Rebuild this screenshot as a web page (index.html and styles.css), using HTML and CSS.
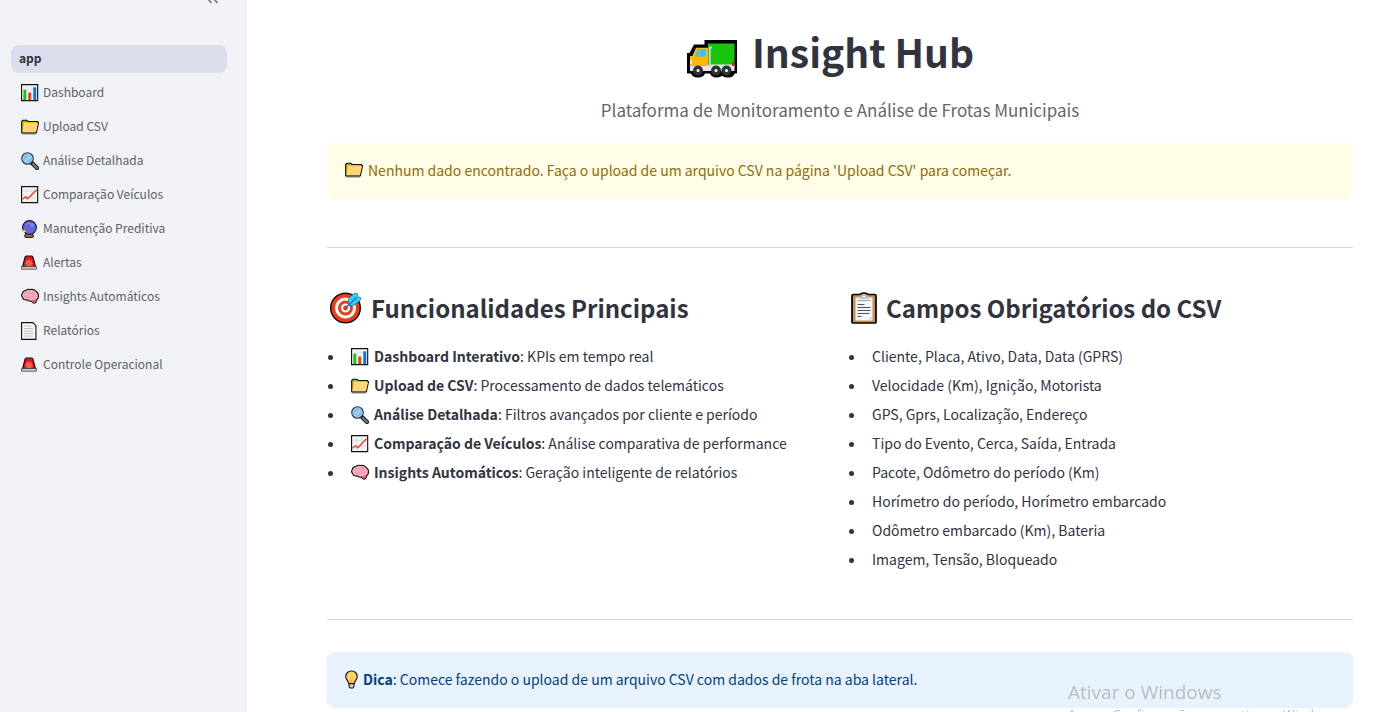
FILE: index.html
```html
<!DOCTYPE html>
<html lang="pt-BR">
<head>
<meta charset="utf-8">
<meta name="viewport" content="width=device-width, initial-scale=1">
<title>Insight Hub</title>
<link rel="stylesheet" href="styles.css">
</head>
<body>
<svg class="sprite" aria-hidden="true">
  <symbol id="chart" viewBox="0 0 19 19">
    <path d="M.6 .6h17v17H.6z" fill="#f4f4f4" stroke="#111" stroke-width="1.200"/>
    <path d="M1 5.500h16M1 11.500h16M6 1v16M11.500 1v16" stroke="#d9dade" stroke-width=".7"/>
    <path d="M2.500 6h3v11h-3z" fill="#16c60c"/><path d="M7.700 9h3v8h-3z" fill="#f03a17"/><path d="M13 3.500h3V17h-3z" fill="#0078d7"/>
  </symbol>
  <symbol id="folder" viewBox="0 0 18 18">
    <path d="M1 16h14" stroke="#9a9ca0" stroke-width="1.200"/>
    <path d="M.7 3.500 2 2.300h4l1.200 1.200h9.300v1.200h1l-2.200 10.100H.7z" fill="#ffb900" stroke="#111" stroke-width="1.200" stroke-linejoin="round"/>
    <path d="M3.200 5H17l-2.100 9.200H1.300z" fill="#ffd679"/><path d="M2.500 3.200h3.200" stroke="#3c9bc0"/>
  </symbol>
  <symbol id="lens" viewBox="0 0 18 18">
    <path d="m10.500 10.500 5.500 5.500" stroke="#111" stroke-width="4" stroke-linecap="round"/>
    <path d="m12 12 4 4" stroke="#727b83" stroke-width="2.300" stroke-linecap="round"/>
    <circle cx="6.500" cy="6.500" r="5.700" fill="#83beec" stroke="#283342" stroke-width="1.300"/>
    <circle cx="6.500" cy="6.500" r="4.700" fill="none" stroke="#b9d5e8" stroke-width=".7"/>
    <path d="m3.500 8.500 5-5 1.400 1.400-5 5z" fill="#a9d5f5"/>
  </symbol>
  <symbol id="trend" viewBox="0 0 19 19">
    <path d="M.6 .6h17v17H.6z" fill="#f4f4f4" stroke="#111" stroke-width="1.200"/>
    <path d="M1 5.500h16M1 11.500h16M6 1v16M11.500 1v16" stroke="#d3d5d9" stroke-width=".8"/>
    <path d="m1.500 14 3.300-2.700 2.300 2.200L16.500 4" fill="none" stroke="#f03a17" stroke-width="1.300"/>
  </symbol>
  <symbol id="crystal" viewBox="1 0 18 18">
    <path d="m6 13-1.500 3.200.8 1.200h7.500l.8-1.200L12 13z" fill="#a16a43" stroke="#111"/>
    <circle cx="9.500" cy="7.500" r="6.900" fill="#7160df" stroke="#1b1734" stroke-width="1.100"/>
    <path d="M6 5a5 5 0 0 1 4-2" fill="none" stroke="#a298ef"/>
    <path d="m12 2.500.6 1.900 1.900.6-1.900.6-.6 1.900-.6-1.900L9.500 5l1.900-.6z" fill="#31d2f7"/>
    <path d="m4 8.800.7 1.900 1.900.7-1.900.7L4 14l-.7-1.900-1.900-.7 1.900-.7z" fill="#fff100"/>
  </symbol>
  <symbol id="siren" viewBox="0 0 18 18">
    <path d="M1.500 13 4 3.300q.3-1.300 1.500-1.300h5q1.200 0 1.500 1.300L14.500 13z" fill="#e81224" stroke="#111" stroke-width="1.200"/>
    <path d="m8 5 1 1.700 2-.4-.4 1.900 1.600 1.300-1.700 1v2h-5v-2l-1.700-1 1.600-1.300L5 6.300l2 .4z" fill="#f7634a"/>
    <path d="M.5 12.500h15v2.700H.5z" fill="#c9cbce" stroke="#333" stroke-width=".7"/>
  </symbol>
  <symbol id="brain" viewBox="0 0 18 18">
    <path d="M5 2.200Q7 .8 9.500 1.500q4-.8 6 2.200 2.300 1.500 2 4.300 0 3-2.200 4 .2 3.200-2.600 3.300l-2.500-2.200q-3 .4-4.100-1.300-3.500.7-4.300-1.800Q-.3 7.500 1.300 5.500q.5-2.800 3.700-3.300z" fill="#f4abba" stroke="#111" stroke-width="1.100"/>
    <path d="M4 4.500q2-.7 2.500 1.300M9 3q-.5 2 1.500 2.500M13 4q-2.500 1-1 3M3 8.500q2-.8 3 .8M7 11q0-3 3-3m4.500-1q-.5 2-3 2" fill="none" stroke="#e98ba2" stroke-width=".8"/>
    <path d="M10 12.500q2.500.2 4.500-1 0 3-2 3z" fill="#e74856"/>
  </symbol>
  <symbol id="page" viewBox="0 0 18 18">
    <path d="M.6 .6h11.200l3.100 3.100v13.700H.6z" fill="#f6f6f6" stroke="#111" stroke-width="1.100"/>
    <path d="M3 4h7M3 6.500h9M3 9h9M3 11.500h9M3 14h9" stroke="#b8bbc0" stroke-width=".9"/>
  </symbol>
  <symbol id="bulb" viewBox="0 0 14 20">
    <path d="M4.300 14v3.500l1.300 1.700h2.800l1.300-1.700V14z" fill="#c9ccd0" stroke="#111" stroke-width="1.100"/>
    <path d="M7 .8a6 6 0 0 0-6.200 6c0 3 2.600 4.200 3.300 7.700h5.800c.7-3.500 3.300-4.700 3.300-7.700A6 6 0 0 0 7 .8z" fill="#ffd067" stroke="#111" stroke-width="1.200"/>
    <path d="M5 9.500 6.200 14h1.600L9 9.500l-2 1z" fill="#ffb900"/>
  </symbol>
  <symbol id="truck" viewBox="0 0 50 38">
    <path d="M17.500 0H50v33.500h-2.200Q46 38 41 37.500q-3.500.5-5.800-1.700-2.400 2-6.200 1.700-4.500-.3-6-4h-5Q16.500 37.500 11 37.500T4 33.500H0V13h2.500L7 4.500h10.500z" fill="#000"/>
    <path d="M21 3.500h26.500v24H21z" fill="#16c60c"/>
    <path d="M9 7.800H21V27H3V16h2.300z" fill="#ffb900"/>
    <path d="M10.500 9H19v7.500H8z" fill="#31c8f3"/><path d="M12.500 7.800V17" stroke="#e5a33c"/>
    <path d="M3 26h17l2-1.500h25.500V31H3z" fill="#e3e5e8"/>
    <path d="M25 7.500h-2.200v19" fill="none" stroke="#c9cdd1" stroke-width="2"/>
    <path d="M3 20h2v4H3z" fill="#fff3b0"/><path d="M45 22h2.500v4H45z" fill="#e81224"/>
    <g fill="#c5c8cc" stroke="#303236" stroke-width="3.500"><circle cx="11" cy="30.500" r="3.300"/><circle cx="29" cy="30.500" r="3.300"/><circle cx="39.500" cy="30.500" r="3.300"/></g>
    <g fill="#fff"><circle cx="11" cy="30.500" r="1.200"/><circle cx="29" cy="30.500" r="1.200"/><circle cx="39.500" cy="30.500" r="1.200"/></g>
  </symbol>
  <symbol id="target" viewBox="0 0 32 32">
    <circle cx="15.500" cy="16" r="14.800" fill="#f03a17" stroke="#111" stroke-width="1.500"/>
    <circle cx="15.500" cy="16" r="9" fill="none" stroke="#fff" stroke-width="3"/>
    <circle cx="15.500" cy="16" r="3.500" fill="#f03a17" stroke="#fff" stroke-width="2.200"/>
    <path d="m18 11 1-5.500L25 1l2.500.5.2 3L31 6l-.7 2-5.800 5-5 1z" fill="#31d2f7" stroke="#14506b" stroke-width=".6"/>
    <path d="M15.500 16 26.500 5.500" stroke="#0078d7" stroke-width="1.500"/>
  </symbol>
  <symbol id="clipboard" viewBox="0 0 26 32">
    <path d="M2.500 2.500h6Q10 1 13 1t4.500 1.500h6q1.500 0 1.500 1.500v26q0 1-1 1H2q-1 0-1-1V4q0-1.500 1.500-1.500z" fill="#c19259" stroke="#000" stroke-width="1.700"/>
    <path d="M4.500 5.500h17v23h-17z" fill="#f6f6f6"/>
    <path d="M8.500 3.800h2.300q.7-1.700 2.200-1.700t2.200 1.700h2.300v3h-9z" fill="#b9bcc0"/><path d="M6.500 8.500h13" stroke="#a9acb0" stroke-width="1.200"/><circle cx="13" cy="4.500" r="1" fill="#fff"/>
    <path d="M6.500 12.500h7M6.500 15.500h13M6.500 18.500h13M6.500 21.500h12M6.500 24.500h4" stroke="#50555b" stroke-width="1"/><path d="M18.500 28.500v-3h3z" fill="#c7c9cc"/>
  </symbol>
</svg>
<div class="app">
  <aside class="sidebar">
    <div class="sidebar-top">
      <button class="collapse" type="button" aria-label="Recolher menu">
        <svg viewBox="0 0 12 4" width="12" height="4" aria-hidden="true"><path d="m.5-1.500 4 4.500M6.500-1.500l4 4.500" fill="none" stroke="#777a85" stroke-width="1.800"/></svg>
      </button>
    </div>
    <nav class="nav">
      <a class="nav-link current" href="#app" aria-current="page">app</a>
      <a class="nav-link" href="#dashboard"><svg class="icon"><use href="#chart"/></svg>Dashboard</a>
      <a class="nav-link" href="#upload"><svg class="icon"><use href="#folder"/></svg>Upload CSV</a>
      <a class="nav-link" href="#analise"><svg class="icon"><use href="#lens"/></svg>Análise Detalhada</a>
      <a class="nav-link" href="#comparacao"><svg class="icon"><use href="#trend"/></svg>Comparação Veículos</a>
      <a class="nav-link" href="#manutencao"><svg class="icon"><use href="#crystal"/></svg>Manutenção Preditiva</a>
      <a class="nav-link" href="#alertas"><svg class="icon"><use href="#siren"/></svg>Alertas</a>
      <a class="nav-link" href="#insights"><svg class="icon"><use href="#brain"/></svg>Insights Automáticos</a>
      <a class="nav-link" href="#relatorios"><svg class="icon"><use href="#page"/></svg>Relatórios</a>
      <a class="nav-link" href="#controle"><svg class="icon"><use href="#siren"/></svg>Controle Operacional</a>
    </nav>
  </aside>
  <main class="main">
    <h1 class="title"><svg class="icon-truck"><use href="#truck"/></svg>Insight Hub</h1>
    <p class="subtitle">Plataforma de Monitoramento e Análise de Frotas Municipais</p>
    <div class="alert warning"><svg class="icon"><use href="#folder"/></svg><p>Nenhum dado encontrado. Faça o upload de um arquivo CSV na página 'Upload CSV' para começar.</p></div>
    <hr class="rule rule-top">
    <div class="columns">
      <section>
        <h2 class="heading"><svg class="icon-target"><use href="#target"/></svg>Funcionalidades Principais</h2>
        <ul class="list">
          <li><svg class="icon"><use href="#chart"/></svg><strong>Dashboard Interativo</strong>: KPIs em tempo real</li>
          <li><svg class="icon"><use href="#folder"/></svg><strong>Upload de CSV</strong>: Processamento de dados telemáticos</li>
          <li><svg class="icon"><use href="#lens"/></svg><strong>Análise Detalhada</strong>: Filtros avançados por cliente e período</li>
          <li><svg class="icon"><use href="#trend"/></svg><strong>Comparação de Veículos</strong>: Análise comparativa de performance</li>
          <li><svg class="icon"><use href="#brain"/></svg><strong>Insights Automáticos</strong>: Geração inteligente de relatórios</li>
        </ul>
      </section>
      <section>
        <h2 class="heading"><svg class="icon-clipboard"><use href="#clipboard"/></svg>Campos Obrigatórios do CSV</h2>
        <ul class="list">
          <li>Cliente, Placa, Ativo, Data, Data (GPRS)</li>
          <li>Velocidade (Km), Ignição, Motorista</li>
          <li>GPS, Gprs, Localização, Endereço</li>
          <li>Tipo do Evento, Cerca, Saída, Entrada</li>
          <li>Pacote, Odômetro do período (Km)</li>
          <li>Horímetro do período, Horímetro embarcado</li>
          <li>Odômetro embarcado (Km), Bateria</li>
          <li>Imagem, Tensão, Bloqueado</li>
        </ul>
      </section>
    </div>
    <hr class="rule rule-bottom">
    <div class="alert info"><svg class="icon-bulb"><use href="#bulb"/></svg><p><strong>Dica</strong>: Comece fazendo o upload de um arquivo CSV com dados de frota na aba lateral.</p></div>
  </main>
</div>
<div class="watermark">
  <p class="watermark-title">Ativar o Windows</p>
  <p class="watermark-text">Acesse Configurações para ativar o Windows.</p>
</div>
</body>
</html>
```
FILE: styles.css
```css
* { box-sizing: border-box; }

body {
  margin: 0;
  background: #fff;
  color: #31333f;
  font-family: "Noto Sans CJK SC", "Open Sans", sans-serif;
  font-size: 14px;
}

h1, h2, p, ul { margin: 0; padding: 0; }

.sprite { display: none; }

.app {
  display: flex;
  height: 100vh;
  overflow: hidden;
}

.sidebar {
  flex: 0 0 247px;
  background: #f0f2f6;
  padding: 0 20px 0 11px;
}

.sidebar-top {
  display: flex;
  justify-content: flex-end;
  height: 45px;
  padding-right: 8px;
}

.collapse {
  align-self: flex-start;
  display: flex;
  padding: 0;
  border: 0;
  background: none;
}

.nav {
  display: flex;
  flex-direction: column;
  gap: 6px;
}

.nav-link {
  display: flex;
  align-items: flex-start;
  gap: 4px;
  height: 28px;
  padding: 0 10px;
  border-radius: 8px;
  color: #5c5f6b;
  font-size: 12px;
  line-height: 26px;
  text-decoration: none;
}

.nav-link.current {
  padding: 0 8px;
  background: #d9deea;
  color: #31333f;
  font-weight: 600;
}

.icon {
  flex: none;
  width: 18px;
  height: 18px;
}

.nav-link .icon { margin-top: 5px; }

.main {
  flex: 1;
  min-width: 0;
  padding: 28px 35px 0 80px;
}

.title {
  display: flex;
  align-items: flex-start;
  justify-content: center;
  gap: 14px;
  padding: 0 20px 2px 0;
  font-size: 39px;
  font-weight: 700;
  line-height: 46px;
}

.icon-truck {
  width: 52px;
  height: 38px;
  margin-top: 12px;
}

.subtitle {
  margin: 15px 0 18px;
  color: #666;
  font-size: 17px;
  line-height: 30px;
  text-align: center;
}

.alert {
  display: flex;
  align-items: center;
  gap: 5px;
  padding: 15px 18px 17px;
  border-radius: 8px;
  line-height: 24px;
}

.warning { background: #fffce7; color: #926c05; }
.info { background: #e8f2fc; color: #004280; }

.icon-bulb {
  width: 13px;
  height: 19px;
}

.rule {
  height: 1px;
  border: 0;
  background: #d6d6d9;
}

.rule-top { margin: 48px 0 44px; }
.rule-bottom { margin: 45px 0 32px; }

.columns {
  display: grid;
  grid-template-columns: 1fr 1fr;
  gap: 16px;
}

.heading {
  display: flex;
  align-items: flex-start;
  gap: 9px;
  padding-left: 3px;
  margin-bottom: 18px;
  font-size: 24px;
  font-weight: 600;
  line-height: 32px;
}

.icon-target {
  width: 32px;
  height: 32px;
}

.icon-clipboard {
  width: 26px;
  height: 32px;
}

.list li {
  margin-left: 18px;
  padding-left: 6px;
  line-height: 29px;
}

.list .icon {
  margin-right: 5px;
  vertical-align: -4px;
}

strong { font-weight: 600; }

.watermark {
  position: fixed;
  left: calc(100% - 320px);
  bottom: -20px;
  height: 52px;
  overflow: hidden;
  color: #b9bcc0;
  font-family: "Open Sans", "Noto Sans", sans-serif;
  white-space: nowrap;
  pointer-events: none;
}

.watermark-title {
  font-size: 19px;
  line-height: 24px;
}

.watermark-text {
  font-size: 13px;
  line-height: 20px;
}
```
